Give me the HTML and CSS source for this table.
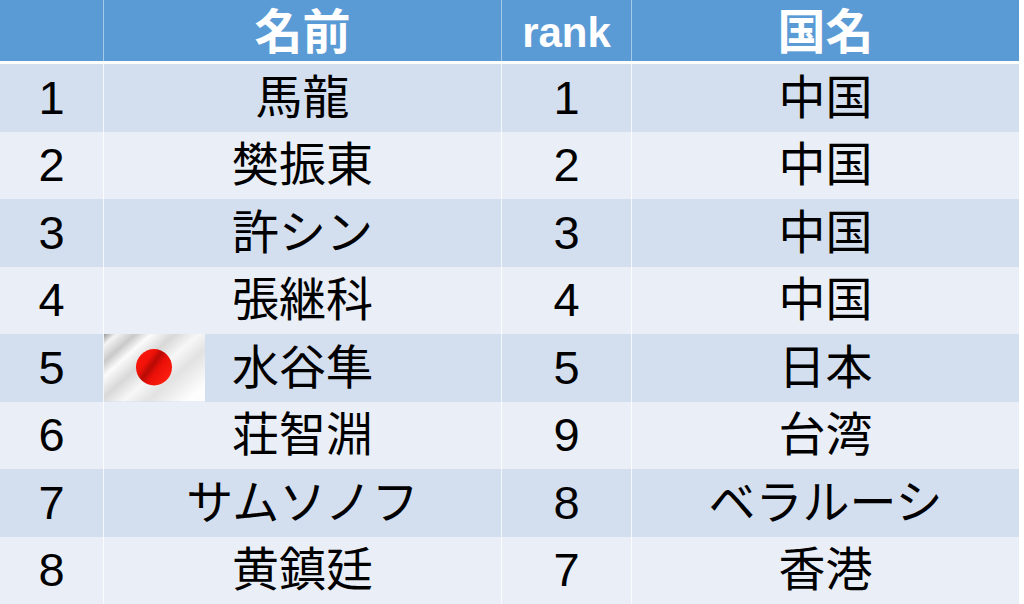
FILE: index.html
```html
<!DOCTYPE html>
<html lang="ja">
<head>
<meta charset="utf-8">
<title>ランキング</title>
<link rel="stylesheet" href="styles.css">
</head>
<body>
<div class="table">
  <div class="cell head"></div>
  <div class="cell head">名前</div>
  <div class="cell head latin">rank</div>
  <div class="cell head">国名</div>

  <div class="cell odd">1</div>
  <div class="cell odd">馬龍</div>
  <div class="cell odd">1</div>
  <div class="cell odd">中国</div>

  <div class="cell even">2</div>
  <div class="cell even">樊振東</div>
  <div class="cell even">2</div>
  <div class="cell even">中国</div>

  <div class="cell odd">3</div>
  <div class="cell odd">許シン</div>
  <div class="cell odd">3</div>
  <div class="cell odd">中国</div>

  <div class="cell even">4</div>
  <div class="cell even">張継科</div>
  <div class="cell even">4</div>
  <div class="cell even">中国</div>

  <div class="cell odd">5</div>
  <div class="cell odd flagcell">
    <svg class="flag" viewBox="0 0 101 67" width="101" height="67" preserveAspectRatio="none" aria-hidden="true">
      <defs>
        <linearGradient id="cloth" x1="0" y1="0" x2="1" y2="0.75">
          <stop offset="0" stop-color="#9a9a9a"/>
          <stop offset="0.08" stop-color="#f4f4f4"/>
          <stop offset="0.2" stop-color="#c9c9c9"/>
          <stop offset="0.3" stop-color="#fbfbfb"/>
          <stop offset="0.45" stop-color="#d8d8d8"/>
          <stop offset="0.6" stop-color="#f7f7f7"/>
          <stop offset="0.75" stop-color="#e2e2e2"/>
          <stop offset="1" stop-color="#fdfdfd"/>
        </linearGradient>
        <linearGradient id="sun" x1="0" y1="0" x2="1" y2="0.75">
          <stop offset="0" stop-color="#ff1a10"/>
          <stop offset="0.35" stop-color="#f01208"/>
          <stop offset="0.5" stop-color="#b80a05"/>
          <stop offset="0.65" stop-color="#ea1008"/>
          <stop offset="1" stop-color="#ff2010"/>
        </linearGradient>
      </defs>
      <rect width="101" height="67" fill="url(#cloth)"/>
      <circle cx="50" cy="33" r="18" fill="url(#sun)"/>
    </svg>
    <span>水谷隼</span>
  </div>
  <div class="cell odd">5</div>
  <div class="cell odd">日本</div>

  <div class="cell even">6</div>
  <div class="cell even">荘智淵</div>
  <div class="cell even">9</div>
  <div class="cell even">台湾</div>

  <div class="cell odd">7</div>
  <div class="cell odd">サムソノフ</div>
  <div class="cell odd">8</div>
  <div class="cell odd">ベラルーシ</div>

  <div class="cell even">8</div>
  <div class="cell even">黄鎮廷</div>
  <div class="cell even">7</div>
  <div class="cell even">香港</div>
</div>
</body>
</html>
```

FILE: styles.css
```css
html, body {
  margin: 0;
  padding: 0;
  background: #ffffff;
}

.table {
  width: 1019px;
  display: grid;
  grid-template-columns: 103px 398px 130px 388px;
  grid-template-rows: 64px repeat(8, 67.5px);
  font-family: "Liberation Sans", "Noto Sans CJK JP", sans-serif;
  font-size: 47px;
  color: #000000;
}

.cell {
  display: flex;
  align-items: center;
  justify-content: center;
  line-height: 1.2;
  border-left: 1px solid rgba(255, 255, 255, 0.75);
  box-sizing: border-box;
}

.cell:nth-child(4n+1) {
  border-left: none;
}

.head {
  align-self: start;
  height: 61px;
  padding-top: 5px;
  background: #5b9bd5;
  color: #ffffff;
  font-family: "Liberation Sans", "Noto Sans CJK JP", sans-serif;
  font-weight: 700;
  font-size: 48px;
  line-height: 1.1;
  border-left-color: rgba(255, 255, 255, 0.45);
}

.head.latin {
  font-size: 42px;
}

.odd {
  background: #d3deef;
}

.even {
  background: #e9eef7;
}

.flagcell {
  position: relative;
}

.flag {
  position: absolute;
  left: 0;
  top: 0;
  height: 100%;
}
```
